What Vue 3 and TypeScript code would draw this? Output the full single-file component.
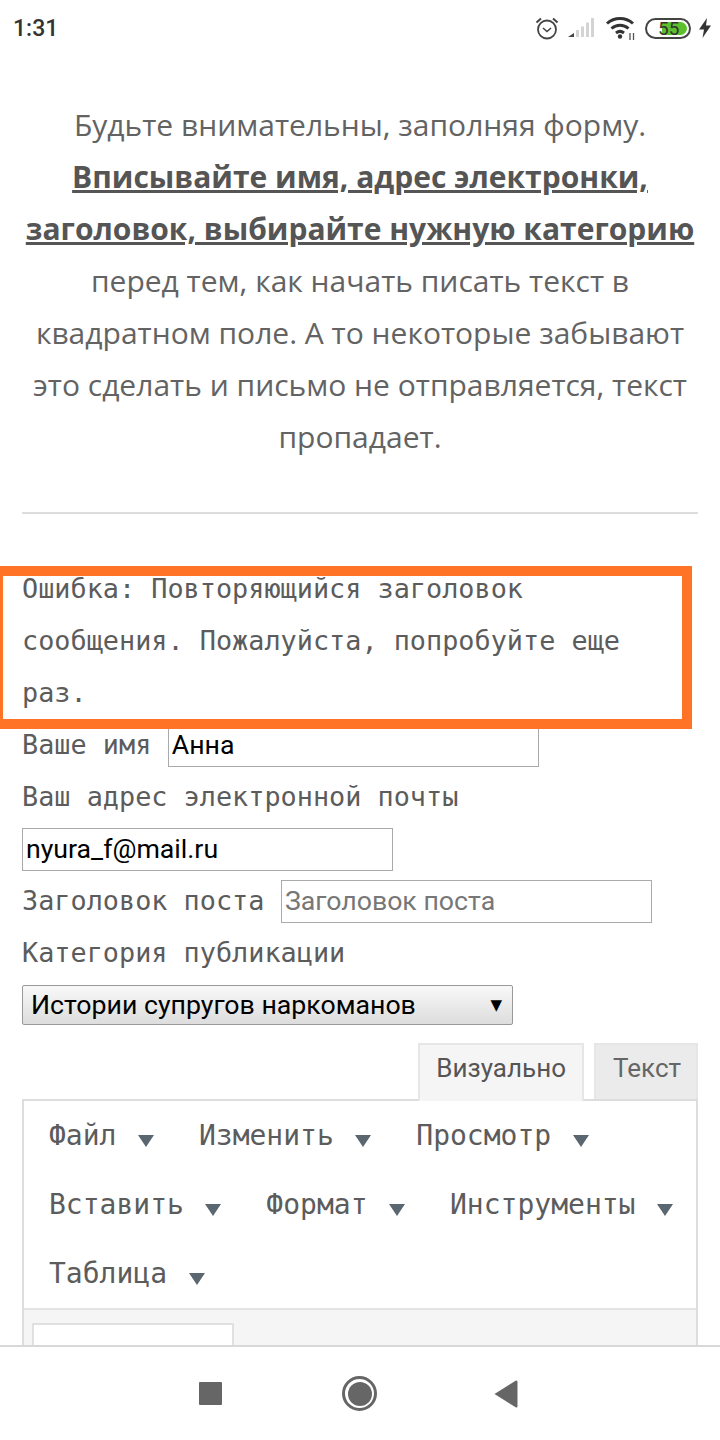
<script setup lang="ts">
const menuRows: string[][] = [
  ['Файл', 'Изменить', 'Просмотр'],
  ['Вставить', 'Формат', 'Инструменты'],
  ['Таблица'],
]
</script>

<template>
  <div class="screen">
    <header class="status">
      <span class="time">1:31</span>
      <div class="status-icons">
        <svg class="alarm" width="26" height="24" viewBox="0 0 26 24" fill="none" stroke="#444" stroke-width="1.8">
          <circle cx="13" cy="13.500" r="9" />
          <path d="M9 12l4 3.500 4-3.500" stroke-width="1.600" />
          <path d="M2.500 6.500L7 2.500M23.500 6.500L19 2.500" stroke-width="2" />
        </svg>
        <svg class="signal" width="28" height="22" viewBox="0 0 28 22">
          <path d="M0 20l6-4v4z" fill="#444" />
          <path d="M8 13h3v7H8zM13 9.500h3V20h-3zM18 5.500h3V20h-3zM23 1h3v19h-3z" fill="#d4d4d4" />
        </svg>
        <svg class="wifi" width="30" height="24" viewBox="0 0 30 24" fill="none" stroke="#333" stroke-width="3">
          <path d="M1 7.500C8.500 .8 19.500 .8 27 7.500" />
          <path d="M5.500 12.500C10.500 8 17.500 8 22.500 12.500" />
          <path d="M10 17C12.500 15 15.500 15 18 17" />
          <circle cx="14" cy="20.500" r="2.200" fill="#333" stroke="none" />
          <path d="M24 17v7M27.500 17v7" stroke-width="1.300" stroke="#555" />
        </svg>
        <div class="battery">
          <span class="battery-fill"></span>
          <span class="battery-text">55</span>
        </div>
        <svg class="bolt" width="14" height="20" viewBox="0 0 14 20">
          <path d="M9 0L1 11.500h5L4.500 20 13 7.500H8z" fill="#333" />
        </svg>
      </div>
    </header>

    <section class="notice">
      <p>
        Будьте внимательны, заполняя форму.
        <strong>Вписывайте имя, адрес электронки, заголовок, выбирайте нужную категорию</strong>
        перед тем, как начать писать текст в квадратном поле. А то некоторые забывают это сделать и письмо не отправляется, текст пропадает.
      </p>
    </section>

    <hr class="divider" />

    <form class="form" @submit.prevent>
      <div class="error">
        Ошибка: Повторяющийся заголовок сообщения. Пожалуйста, попробуйте еще раз.
        <span class="error-frame"></span>
      </div>
      <div class="row">
        <label>Ваше имя</label>
        <input class="field" type="text" value="Анна" />
      </div>
      <div class="row"><label>Ваш адрес электронной почты</label></div>
      <div class="row"><input class="field" type="text" value="nyura_f@mail.ru" /></div>
      <div class="row">
        <label>Заголовок поста</label>
        <input class="field" type="text" placeholder="Заголовок поста" />
      </div>
      <div class="row"><label>Категория публикации</label></div>
      <div class="select">
        <span>Истории супругов наркоманов</span>
        <i class="select-arrow">▼</i>
      </div>

      <div class="tabs">
        <div class="tab active">Визуально</div>
        <div class="tab">Текст</div>
      </div>
      <div class="editor">
        <div class="menubar">
          <div v-for="(row, r) in menuRows" :key="r" class="menu-row">
            <div v-for="item in row" :key="item" class="menu-item">
              <span>{{ item }}</span>
              <i class="caret"></i>
            </div>
          </div>
        </div>
        <div class="toolbar">
          <div class="format-box">Абзац</div>
        </div>
      </div>
    </form>

    <nav class="navbar">
      <span class="nav-square"></span>
      <span class="nav-circle"><span></span></span>
      <svg width="24" height="28" viewBox="0 0 24 28"><path d="M.5 14L22 .5Q23.500 0 23.500 2V26Q23.500 28 22 27.500z" fill="#666" /></svg>
    </nav>
  </div>
</template>

<style>
html, body { margin: 0; background: #fff; }
</style>

<style scoped>
.screen {
  position: relative;
  width: 720px;
  height: 1440px;
  overflow: hidden;
  background: #fff;
  color: #555;
  font-family: "Open Sans", "Noto Sans", sans-serif;
}
.status {
  height: 56px;
  padding: 0 8px 0 13px;
  box-sizing: border-box;
  display: flex;
  align-items: center;
  justify-content: space-between;
}
.time {
  font: 500 23px Roboto, sans-serif;
  color: #333;
}
.status-icons { display: flex; align-items: center; }
.alarm { margin-right: 8px; }
.signal { margin-right: 10px; }
.wifi { margin-right: 9px; }
.battery {
  position: relative;
  width: 42px;
  height: 17px;
  border: 2px solid #444;
  border-radius: 11px;
  margin-right: 7px;
  overflow: hidden;
  background: #fff;
}
.battery-fill {
  position: absolute;
  left: 15px; top: 2px; bottom: 2px;
  width: 25px;
  background: #5cc02c;
  border-radius: 2px 7px 7px 2px;
}
.battery-text {
  position: absolute;
  left: 11px; top: -2px;
  font: 400 19px/21px Roboto, sans-serif;
  color: #333;
}
.notice {
  padding: 43px 22px 0;
  text-align: center;
  font-size: 30px;
  line-height: 52px;
  color: #636363;
}
.notice p { margin: 0; }
.notice strong {
  font-weight: 700;
  color: #555;
  text-decoration: underline;
}
.divider {
  margin: 49px 22px 0;
  border: 0;
  border-top: 2px solid #ddd;
}
.form {
  padding: 49px 22px 0;
  color: #5c5c5c;
  font-family: "DejaVu Sans Mono", monospace;
  font-size: 26.85px;
  line-height: 52px;
}
.error { position: relative; }
.error-frame {
  position: absolute;
  left: -29px;
  top: 3px;
  width: 699px;
  height: 163px;
  box-sizing: border-box;
  border: 10px solid #ff7326;
  pointer-events: none;
}
.row {
  height: 52px;
  display: flex;
  align-items: center;
  gap: 16.5px;
  white-space: nowrap;
}
.field {
  width: 371px;
  height: 43px;
  box-sizing: border-box;
  padding: 1px 3px;
  border: 1px solid #aaa;
  border-radius: 0;
  background: #fff;
  color: #000;
  font: 400 26.7px Roboto, sans-serif;
  outline: none;
}
.field::placeholder { color: #777; opacity: 1; }
.select {
  margin-top: 6px;
  width: 491px;
  height: 40px;
  box-sizing: border-box;
  padding: 0 10px 0 8px;
  display: flex;
  align-items: center;
  justify-content: space-between;
  border: 1px solid #999;
  border-radius: 2px;
  background: linear-gradient(#f8f8f8, #ddd);
  color: #000;
  font: 400 26.7px Roboto, sans-serif;
}
.select-arrow { font: normal 15px "DejaVu Sans", sans-serif; }
.tabs {
  margin: 18px 0 0;
  height: 56px;
  display: flex;
  justify-content: flex-end;
  align-items: flex-end;
  gap: 10px;
  position: relative;
  z-index: 1;
  font: 400 26px Roboto, sans-serif;
}
.tab {
  height: 56px;
  box-sizing: border-box;
  padding: 0 15px 9px 17px;
  display: flex;
  align-items: center;
  background: #ebebeb;
  border: 2px solid #e6e6e6;
  border-bottom: 0;
  color: #666;
}
.tab.active {
  background: #f5f5f5;
  color: #555;
  padding: 0 16px 11px;
  height: 58px;
  margin-bottom: -2px;
}
.editor {
  border: 2px solid #ddd;
  width: 676px;
  box-sizing: border-box;
}
.menubar { padding: 0 0 0 25px; }
.menu-row {
  height: 69px;
  display: flex;
  align-items: center;
  gap: 45px;
}
.menu-item {
  display: flex;
  align-items: center;
  gap: 21.5px;
  color: #5c5c5c;
  font-family: "DejaVu Sans Mono", monospace;
  font-size: 28px;
}
.caret {
  margin-top: 11px;
  width: 0; height: 0;
  border-left: 8px solid transparent;
  border-right: 8px solid transparent;
  border-top: 12px solid #5a6670;
}
.toolbar {
  height: 100px;
  background: #f5f5f5;
  border-top: 2px solid #e4e4e4;
  padding: 13px 8px;
  box-sizing: border-box;
}
.format-box {
  width: 202px;
  height: 60px;
  box-sizing: border-box;
  border: 2px solid #e0e0e0;
  background: #fff;
  padding: 5px 0 0 14px;
  font: 400 26px/52px Roboto, sans-serif;
  color: #555;
}
.navbar {
  position: absolute;
  left: 0; right: 0; bottom: 0;
  height: 95px;
  box-sizing: border-box;
  background: #fff;
  border-top: 2px solid #d8d8d8;
  display: flex;
  align-items: center;
  padding-left: 199px;
}
.nav-square {
  width: 23px; height: 23px;
  background: #666;
  border-radius: 1px;
}
.nav-circle {
  margin-left: 120px;
  margin-right: 117px;
  width: 35px; height: 35px;
  box-sizing: border-box;
  border: 3px solid #666;
  border-radius: 50%;
  display: flex;
  align-items: center;
  justify-content: center;
}
.nav-circle span {
  width: 24px; height: 24px;
  border-radius: 50%;
  background: #666;
}
</style>
